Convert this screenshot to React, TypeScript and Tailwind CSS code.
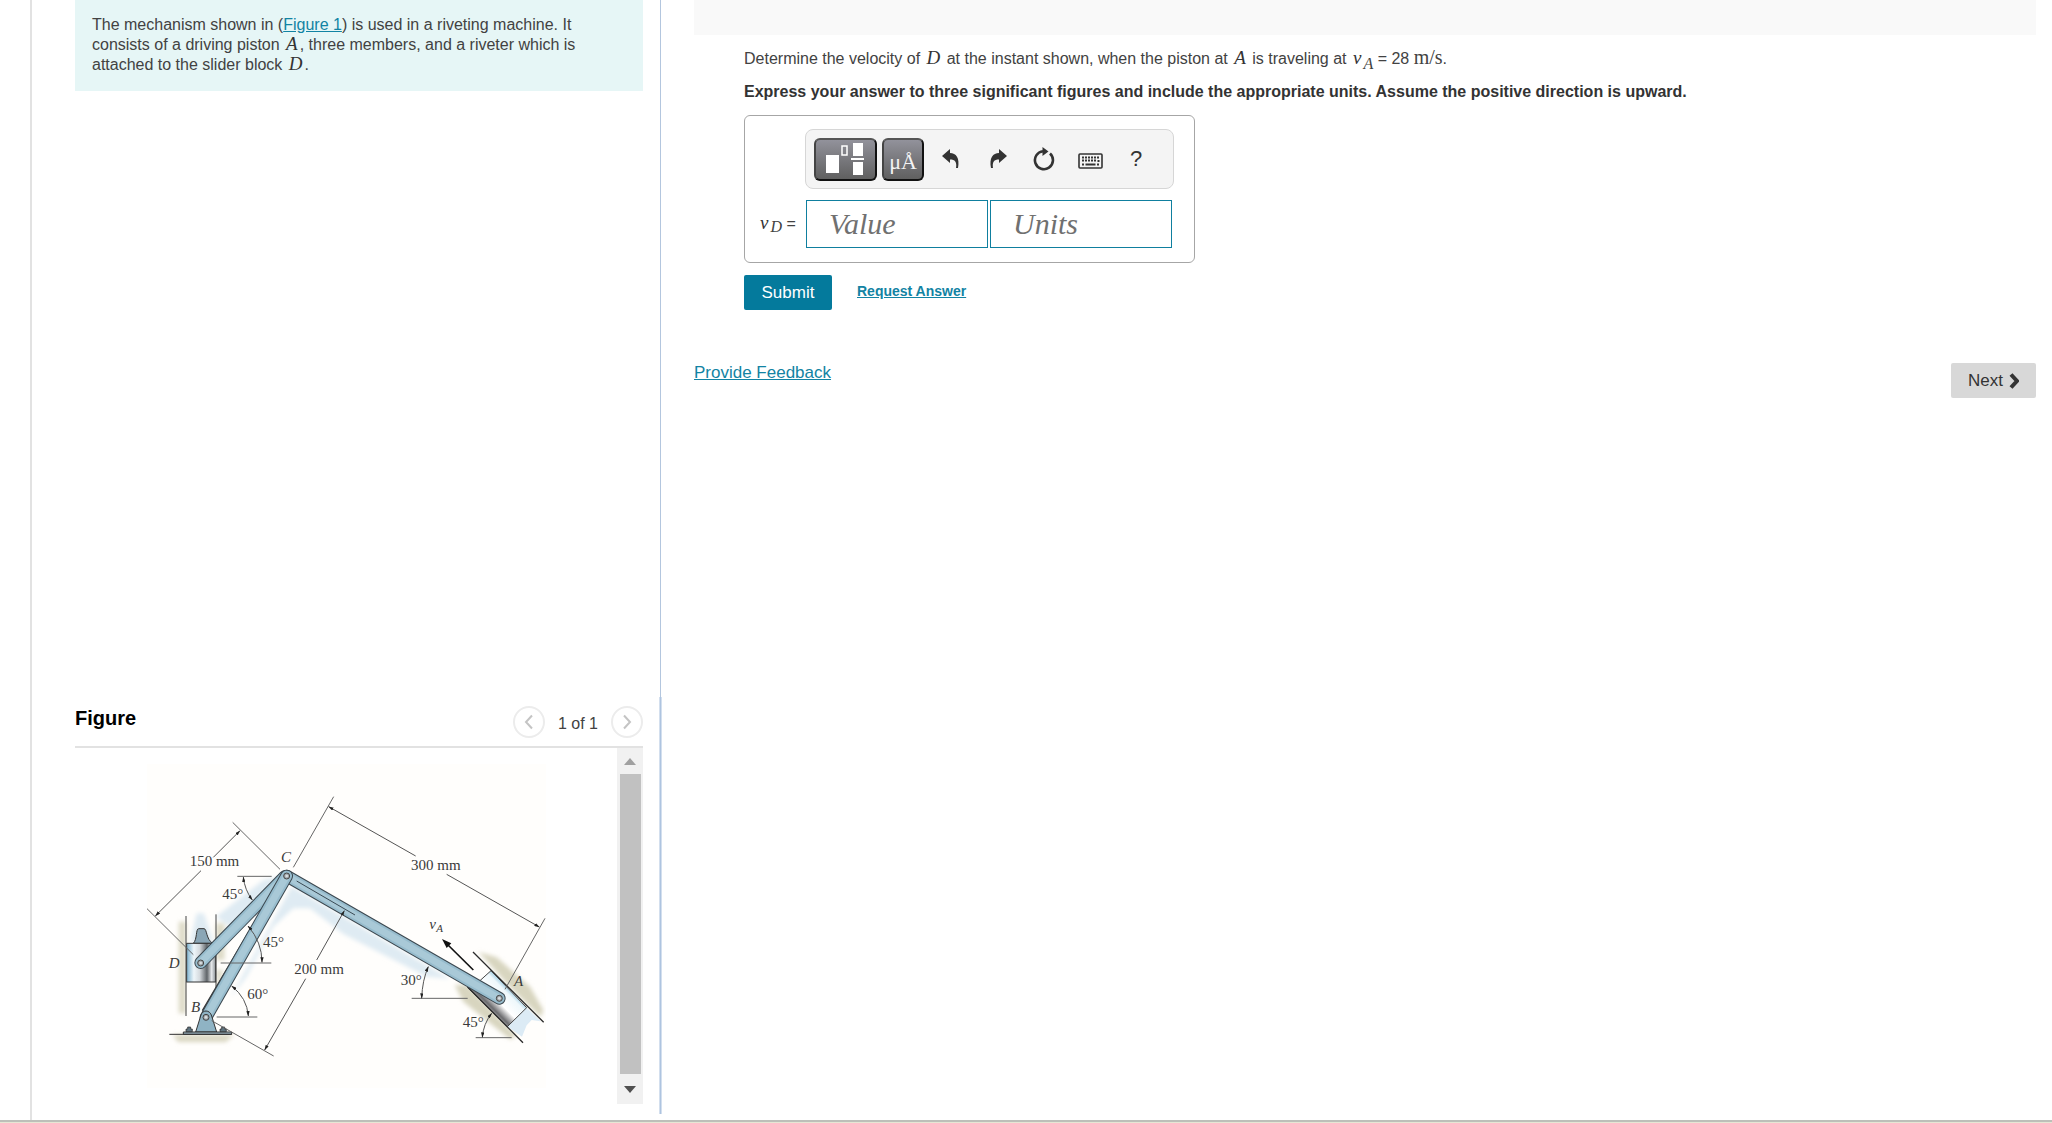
import React, { useState } from 'react'

const MATH = "mx-0.5 font-['Liberation_Serif'] italic text-[19px] leading-[0px] text-[#333]"

interface ArrowProps {
  d: string
  start?: boolean
  end?: boolean
}

function Dimension({ d, start = false, end = false }: ArrowProps) {
  return (
    <path
      d={d}
      fill="none"
      stroke="#555"
      strokeWidth={3}
      markerStart={start ? 'url(#tip)' : undefined}
      markerEnd={end ? 'url(#tip)' : undefined}
    />
  )
}

interface MemberProps {
  x1: number
  y1: number
  x2: number
  y2: number
  width: number
}

// A link of the mechanism: dark outline, light blue body, paler highlight
function Member({ x1, y1, x2, y2, width }: MemberProps) {
  const line = { x1, y1, x2, y2, strokeLinecap: 'round' as const }
  return (
    <g>
      <line {...line} stroke="#3b474f" strokeWidth={width} />
      <line {...line} stroke="#97bccd" strokeWidth={width - 6} />
      <line {...line} stroke="#a9c9d7" strokeWidth={width - 18} />
    </g>
  )
}

function Pin({ x, y }: { x: number; y: number }) {
  return (
    <g stroke="#444" strokeWidth={3}>
      <circle cx={x} cy={y} r={9} fill="#a3a9ac" />
      <circle cx={x} cy={y} r={4} fill="#d8dde0" stroke="none" />
    </g>
  )
}

function MechanismFigure() {
  return (
    <svg
      viewBox="51 -48 1197 972"
      className="block w-full bg-[#fffefc]"
      role="img"
      aria-label="Riveting machine mechanism"
    >
      <defs>
        <marker id="tip" viewBox="0 0 16 10" refX="15" refY="5" markerWidth="16" markerHeight="10" markerUnits="userSpaceOnUse" orient="auto-start-reverse">
          <path d="M0 0L16 5L0 10Z" fill="#222" />
        </marker>
        <linearGradient id="block" x1="0" x2="1" y1="0" y2="0">
          <stop offset="0" stopColor="#7fb3cf" />
          <stop offset="0.25" stopColor="#eef6fa" />
          <stop offset="0.45" stopColor="#d5dade" />
          <stop offset="0.7" stopColor="#5f6468" />
          <stop offset="0.86" stopColor="#e6e9eb" />
          <stop offset="1" stopColor="#8a9094" />
        </linearGradient>
        <linearGradient id="piston" gradientUnits="userSpaceOnUse" x1="1142" y1="620" x2="1068" y2="694">
          <stop offset="0" stopColor="#7dbbd9" />
          <stop offset="0.2" stopColor="#eef7fb" />
          <stop offset="0.55" stopColor="#ffffff" />
          <stop offset="0.8" stopColor="#6b6b6e" />
          <stop offset="1" stopColor="#c9ccce" />
        </linearGradient>
        <filter id="soft" x="-20%" y="-20%" width="140%" height="140%">
          <feGaussianBlur stdDeviation="7" />
        </filter>
      </defs>

      {/* wall and motion shading */}
      <g filter="url(#soft)">
        <path d="M146 425H168V700H146Z" fill="#dedbc8" />
        <path d="M258 430H284V540H258Z" fill="#dedbc8" />
        <path d="M258 570H280L262 640Z" fill="#dedbc8" />
        <path d="M128 764H312L288 786H144Z" fill="#dad7c2" />
        <path d="M1046 516L1100 532L1200 620L1240 690L1232 712L1140 622Z" fill="#d8d5bf" />
        <path d="M974 615H1012L1160 768L1140 778L1000 665Z" fill="#d8d5bf" />
        <path d="M258 410L400 300L450 290L300 440Z" fill="#dfebf3" />
        <path d="M485 320L960 596L890 590L640 462L540 385H490L430 440L350 590L300 655Z" fill="#dfebf3" />
        <path d="M200 400H222L250 485H180Z" fill="#dfebf3" />
      </g>
      <path d="M1190 683L1232 724L1205 720L1190 736L1176 770L1132 740Z" fill="#dcebf5" />

      {/* inside of the cylinder below the slider */}
      <path d="M170 606H257V640L215 706H170Z" fill="#fffefc" />

      {/* slider block D */}
      <path d="M190 490C202 478 197 446 206 446H222C231 446 228 478 248 490Z" fill="#8aa6b6" stroke="#333" strokeWidth={3} />
      <rect x={170} y={490} width={87} height={116} fill="url(#block)" stroke="#333" strokeWidth={3} />
      <path d="M168 408V708M258 403V640" stroke="#444" strokeWidth={3} />

      {/* piston A */}
      <path d="M1052 600L1083 572L1190 683L1132 740L1015 625Z" fill="url(#piston)" stroke="#444" strokeWidth={3} />
      <path d="M1029 516L1241 727M1012 620L1179 788" stroke="#2b2b2b" strokeWidth={4} />

      <Member x1={212} y1={548} x2={464} y2={290} width={38} />
      <Member x1={470} y1={288} x2={1108} y2={655} width={38} />
      <path d="M500 303L675 405" stroke="#3a4a54" strokeWidth={3} />
      {/* edge of the far plate of member BC */}
      <path d="M217 692L355 458M372 430L462 278" stroke="#333" strokeWidth={4} />
      <Member x1={228} y1={712} x2={470} y2={288} width={38} />

      {/* support B */}
      <path d="M197 756L212 708C216 688 240 688 245 708L260 756Z" fill="#8fb3c4" stroke="#333" strokeWidth={3} />
      <path d="M160 756H305V763H160Z" fill="#9bb3bf" stroke="#333" strokeWidth={3} />
      <path d="M168 755V747H173V741H182V747H187V755ZM270 755V747H275V741H284V747H289V755Z" fill="#60747f" stroke="#222" strokeWidth={2} />
      <path d="M118 763H305" stroke="#333" strokeWidth={3} />

      <Pin x={212} y={549} />
      <Pin x={470} y={288} />
      <Pin x={228} y={712} />
      <Pin x={1108} y={655} />

      {/* extension lines */}
      <g stroke="#666" strokeWidth={3}>
        <path d="M308 127L450 268M50 385L190 524M611 50L490 262M1245 415L1125 628M245 722L431 828" />
        <path d="M322 289H425M272 549H424M260 711H382M845 655H1013M1037 773H1145" />
      </g>

      <Dimension d="M250 232L330 152" end />
      <Dimension d="M213 272L76 408" end />
      <Dimension d="M857 228L596 80" end />
      <Dimension d="M950 283L1228 441" end />
      <Dimension d="M560 540L643 392" end />
      <Dimension d="M527 596L404 810" end />
      <Dimension d="M340 291Q344 330 367 360" start end />
      <Dimension d="M354 438Q396 486 396 547" start end />
      <Dimension d="M305 618Q351 654 355 708" start end />
      <Dimension d="M895 560Q877 600 875 655" start end />
      <Dimension d="M1085 700Q1060 732 1057 772" start end />

      <path d="M1030 570L945 486" stroke="#111" strokeWidth={5} />
      <path d="M936 477L964 490L950 504Z" fill="#111" />

      <g fontFamily="'Liberation Serif', serif" fontSize={45} fill="#3a3a3a">
        <text x={179} y={258}>150 mm</text>
        <text x={843} y={270}>300 mm</text>
        <text x={493} y={583}>200 mm</text>
        <text x={277} y={356}>45°</text>
        <text x={399} y={502}>45°</text>
        <text x={352} y={656}>60°</text>
        <text x={812} y={614}>30°</text>
        <text x={998} y={741}>45°</text>
        <g fontStyle="italic">
          <text x={453} y={246}>C</text>
          <text x={116} y={565}>D</text>
          <text x={183} y={697}>B</text>
          <text x={1152} y={617}>A</text>
          <text x={898} y={448}>v</text>
          <text x={919} y={457} fontSize={33}>A</text>
        </g>
      </g>
    </svg>
  )
}

function TemplatesIcon() {
  return (
    <svg viewBox="0 0 40 32" className="h-8 w-10" fill="#fff">
      <rect x={0} y={12} width={13} height={18} />
      <rect x={16} y={3} width={5} height={9} fill="none" stroke="#fff" strokeWidth={1.5} />
      <rect x={27} y={0} width={10} height={13} />
      <rect x={25} y={15} width={13} height={2} />
      <rect x={27} y={19} width={10} height={13} />
    </svg>
  )
}

function UndoIcon({ flipped = false }: { flipped?: boolean }) {
  return (
    <svg viewBox="0 0 18 20" className="h-5 w-[18px]" fill="#333">
      <path
        d="M0 7L8 0V4C14 4 18 9 16 19H14C15 13 13 10.500 8 10.500V14Z"
        transform={flipped ? 'translate(18 0) scale(-1 1)' : undefined}
      />
    </svg>
  )
}

function ResetIcon() {
  return (
    <svg viewBox="0 0 22 24" className="h-6 w-[22px]">
      <path d="M17 6.500A9 9 0 1 1 10 4.200" fill="none" stroke="#333" strokeWidth={2.6} />
      <path d="M9.500 0L15.500 4.500L9.500 9Z" fill="#333" />
    </svg>
  )
}

function KeyboardIcon() {
  return (
    <svg viewBox="0 0 25 16" className="h-4 w-[25px]" fill="none" stroke="#333">
      <rect x={1} y={1} width={23} height={14} rx={1} strokeWidth={1.6} />
      <path d="M4 4.500H21M4 7.500H19" strokeWidth={2} strokeDasharray="2 1" />
      <path d="M4 11.500H6M7.500 11.500H17.500M19 11.500H21M20.500 7V9" strokeWidth={2} />
    </svg>
  )
}

interface ChevronProps {
  className: string
  left?: boolean
  width?: number
}

function Chevron({ className, left = false, width = 2 }: ChevronProps) {
  return (
    <svg viewBox="0 0 10 16" className={className} fill="none" stroke="currentColor" strokeWidth={width}>
      <path d={left ? 'M8 1.500L2 8L8 14.500' : 'M2 1.500L8 8L2 14.500'} />
    </svg>
  )
}

function FigurePanel() {
  const navButton =
    'flex size-8 items-center justify-center rounded-full border-2 border-[#ececec] text-[#c4c4c4]'

  return (
    <section>
      <header className="flex items-start justify-between border-b-2 border-[#e2e2e2] pb-2">
        <h2 className="text-xl leading-6 font-bold text-black">Figure</h2>
        <div className="flex items-center gap-[13px]">
          <button className={navButton} aria-label="Previous figure">
            <Chevron left className="h-4 w-[10px]" />
          </button>
          <span className="pt-1 text-base leading-5">1 of 1</span>
          <button className={navButton} aria-label="Next figure">
            <Chevron className="h-4 w-[10px]" />
          </button>
        </div>
      </header>
      <div className="flex justify-between">
        <div className="my-4 ml-[72px] w-[399px]">
          <MechanismFigure />
        </div>
        <div className="flex w-[26px] flex-col items-center justify-between bg-[#f1f1f1]">
          <svg viewBox="0 0 12 26" className="h-[26px] w-3" fill="#a0a0a0">
            <path d="M0 17L6 10L12 17Z" />
          </svg>
          <div className="w-[21px] grow bg-[#c1c1c1]" />
          <svg viewBox="0 0 12 30" className="h-[30px] w-3" fill="#505050">
            <path d="M0 12H12L6 19Z" />
          </svg>
        </div>
      </div>
    </section>
  )
}

function AnswerBox() {
  const [value, setValue] = useState('')
  const [units, setUnits] = useState('')

  const darkButton =
    'flex h-[43px] items-center justify-center rounded-md border-2 border-t-[#555] border-l-[#444] border-r-[#111] border-b-[#111] bg-linear-to-b from-[#92929b] to-[#606060]'
  const field =
    "h-12 w-[182px] border border-[#0f7f9f] bg-white pl-[22px] font-['Liberation_Serif'] text-[30px] italic text-[#444] placeholder:text-[#707070] outline-none"

  return (
    <div className="w-[451px] rounded-md border border-[#a6a6a6] pt-[13px] pb-3.5">
      <div className="ml-[60px] flex h-[60px] w-[369px] items-center rounded-lg border border-[#d6d6d6] bg-[#f4f4f4] pl-2">
        <button className={`${darkButton} w-[63px]`} aria-label="Templates">
          <TemplatesIcon />
        </button>
        <button
          className={`${darkButton} ml-[5px] w-[42px] pt-1 font-['Liberation_Serif'] text-[22px] text-[#f4f4f4]`}
          aria-label="Symbols"
        >
          μÅ
        </button>
        <div className="ml-[18px] flex items-center gap-[27px]">
          <button aria-label="Undo"><UndoIcon /></button>
          <button aria-label="Redo" className="ml-0.5"><UndoIcon flipped /></button>
          <button aria-label="Reset" className="-ml-px"><ResetIcon /></button>
          <button aria-label="Keyboard shortcuts" className="-ml-1 pt-1"><KeyboardIcon /></button>
          <button aria-label="Help" className="text-[22px] leading-6 text-[#333]">?</button>
        </div>
      </div>
      <div className="mt-[11px] flex items-center pl-[13px]">
        <div className="w-12 text-base">
          <span className={MATH}>v</span>
          <sub className="bottom-[-3px] font-['Liberation_Serif'] text-[16px] italic">D</sub> =
        </div>
        <div className="flex gap-0.5">
          <input className={field} placeholder="Value" aria-label="Value" value={value} onChange={(e) => setValue(e.target.value)} />
          <input className={field} placeholder="Units" aria-label="Units" value={units} onChange={(e) => setUnits(e.target.value)} />
        </div>
      </div>
    </div>
  )
}

export default function App() {
  return (
    <div className="flex h-screen flex-col bg-white font-['Liberation_Sans',Arial,sans-serif] text-base text-[#424242]">
      <div className="flex min-h-0 grow">
        <aside className="ml-[30px] flex w-[632px] shrink-0 border-l-2 border-[#e2e2e2]">
          <div className="flex grow flex-col justify-between pr-4 pb-4 pl-[43px]">
            <div className="bg-[#e6f6f6] px-[17px] pt-[15px] pb-4">
              <p className="max-w-[500px] leading-5">
                The mechanism shown in (
                <a href="#figure" className="text-[#1283a3] underline">Figure 1</a>
                ) is used in a riveting machine. It consists of a driving piston <i className={MATH}>A</i>, three
                members, and a riveter which is attached to the slider block <i className={MATH}>D</i>.
              </p>
            </div>
            <FigurePanel />
          </div>
          <div className="flex w-[3px] flex-col items-end pb-1.5">
            <div className="mr-px w-px grow bg-[#b3c6de]" />
            <div className="h-[417px] w-[3px] border-x border-[#d3dfee] bg-[#aec4e0]" />
          </div>
        </aside>

        <main className="min-w-0 grow pr-4 pl-8">
          <div className="h-[35px] bg-[#f9f9f9]" />
          <div className="pl-[50px]">
            <p className="mt-3 leading-6">
              Determine the velocity of <i className={MATH}>D</i> at the instant shown, when the piston at{' '}
              <i className={MATH}>A</i> is traveling at <i className={MATH}>v</i>
              <sub className="bottom-[-5px] font-['Liberation_Serif'] text-[16px] italic">A</sub> = 28{' '}
              <span className="font-['Liberation_Serif'] text-[20px] leading-[0px]">m/s</span>.
            </p>
            <p className="mt-[9px] mb-[11px] leading-6 font-bold text-[#333]">
              Express your answer to three significant figures and include the appropriate units. Assume the positive
              direction is upward.
            </p>
            <AnswerBox />
            <div className="mt-3 flex items-center">
              <button className="h-[35px] w-[88px] rounded-xs bg-[#047a9c] text-[17px] text-white">Submit</button>
              <a href="#answer" className="ml-[25px] pb-[3px] text-[14px] font-bold text-[#1283a3] underline">
                Request Answer
              </a>
            </div>
          </div>
          <div className="mt-[51px] flex items-start justify-between">
            <a href="#feedback" className="text-[17px] leading-6 text-[#1283a3] underline">Provide Feedback</a>
            <button className="mt-0.5 flex h-[35px] w-[85px] items-center justify-center gap-1.5 rounded-xs bg-[#d8d8d8] text-[17px] text-[#333]">
              Next
              <Chevron className="h-4 w-[10px]" width={4} />
            </button>
          </div>
        </main>
      </div>
      <div className="h-[3px] shrink-0 border-b border-[#e6e6d4] bg-[#bdbfb9]" />
    </div>
  )
}
